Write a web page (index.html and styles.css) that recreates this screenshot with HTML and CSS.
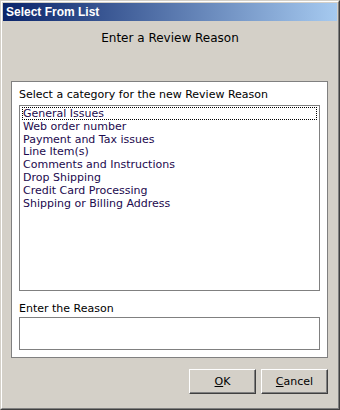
FILE: index.html
```html
<!DOCTYPE html>
<html lang="en">
<head>
<meta charset="UTF-8" />
<title>Select From List</title>
<link rel="stylesheet" href="styles.css">
</head>
<body>

<div class="window">
    <div class="frame">
        <div class="title-bar">Select From List</div>

        <div class="dialog-title">Enter a Review Reason</div>

        <div class="panel">
            <label class="field-label" for="categoryList">Select a category for the new Review Reason</label>
            <ul class="list-box" id="categoryList">
                <li class="selected">General Issues</li>
                <li>Web order number</li>
                <li>Payment and Tax issues</li>
                <li>Line Item(s)</li>
                <li>Comments and Instructions</li>
                <li>Drop Shipping</li>
                <li>Credit Card Processing</li>
                <li>Shipping or Billing Address</li>
            </ul>

            <label class="field-label reason-label" for="reason">Enter the Reason</label>
            <div class="text-box" id="reason"></div>
        </div>

        <div class="buttons">
            <button class="btn"><u>O</u>K</button>
            <button class="btn"><u>C</u>ancel</button>
        </div>
    </div>
</div>

</body>
</html>
```

FILE: styles.css
```css
body {
    margin: 0;
    padding: 0;
    background-color: #d4d0c8;
    font-family: 'DejaVu Sans', Verdana, sans-serif;
    font-size: 11px;
    color: #000;
}

.window {
    width: 340px;
    height: 410px;
    box-sizing: border-box;
    border: 1px solid;
    border-color: #d4d0c8 #404040 #404040 #d4d0c8;
}

.frame {
    height: 100%;
    box-sizing: border-box;
    border: 1px solid;
    border-color: #ffffff #808080 #808080 #ffffff;
    padding: 1px;
    display: flex;
    flex-direction: column;
}

.title-bar {
    height: 18px;
    line-height: 18px;
    padding-left: 3px;
    background: linear-gradient(to right, #0a246a, #a6caf0);
    color: #fff;
    font-family: 'Liberation Sans', Arial, sans-serif;
    font-weight: bold;
    font-size: 12px;
}

.dialog-title {
    text-align: center;
    font-size: 12px;
    margin-top: 10px;
    height: 50px;
}

/* white group panel */
.panel {
    margin: 0 9px 0 8px;
    height: 277px;
    box-sizing: border-box;
    background-color: #fff;
    border: 1px solid #808080;
    padding: 6px 7px 0 7px;
    display: flex;
    flex-direction: column;
}

.field-label {
    display: block;
    font-size: 11px;
    height: 17px;
    line-height: 14px;
}

.reason-label {
    height: 15px;
}

.list-box {
    list-style: none;
    margin: 0 0 11px 0;
    padding: 1px 2px;
    height: 186px;
    box-sizing: border-box;
    border: 1px solid #808080;
    color: #1c0a4e;
}

.list-box li {
    height: 12.8px;
    line-height: 13px;
    padding-left: 1px;
}

.list-box li.selected {
    outline: 1px dotted #000;
    outline-offset: -1px;
}

.text-box {
    height: 33px;
    box-sizing: border-box;
    border: 1px solid #808080;
}

.buttons {
    display: flex;
    justify-content: flex-end;
    gap: 5px;
    padding: 11px 9px 0 0;
}

.btn {
    width: 67px;
    height: 25px;
    background-color: #d4d0c8;
    border: 1px solid;
    border-color: #ffffff #404040 #404040 #ffffff;
    box-shadow: inset -1px -1px 0 #808080;
    font-family: 'DejaVu Sans', Verdana, sans-serif;
    font-size: 11px;
    color: #000;
    padding: 0;
}
```
